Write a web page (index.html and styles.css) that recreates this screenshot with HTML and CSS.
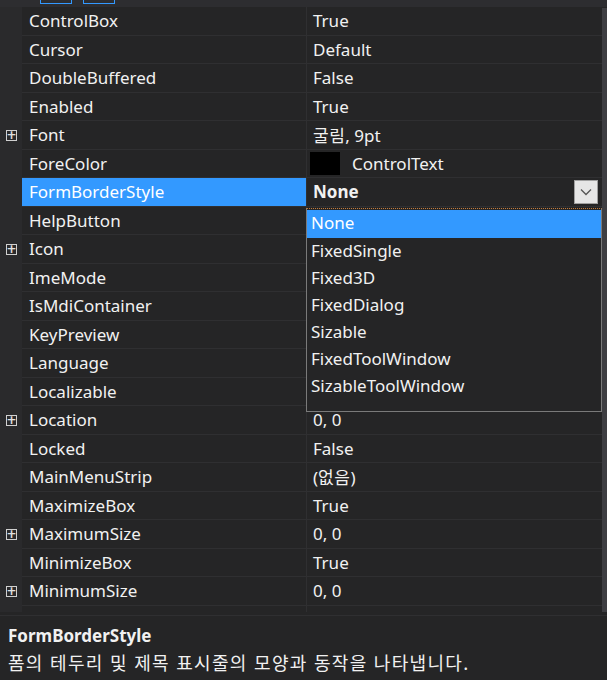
FILE: index.html
```html
<!DOCTYPE html>
<html lang="ko">
<head>
<meta charset="UTF-8">
<meta name="viewport" content="width=device-width, initial-scale=1.0">
<title>Properties</title>
<link rel="stylesheet" href="styles.css">
</head>
<body>

<div class="toolbar">
    <span class="tool-btn first"></span>
    <span class="tool-btn"></span>
</div>

<div class="main">
    <div class="grid">
        <div class="row"><div class="gutter"></div><div class="name">ControlBox</div><div class="value">True</div></div>
        <div class="row"><div class="gutter"></div><div class="name">Cursor</div><div class="value">Default</div></div>
        <div class="row"><div class="gutter"></div><div class="name">DoubleBuffered</div><div class="value">False</div></div>
        <div class="row"><div class="gutter"></div><div class="name">Enabled</div><div class="value">True</div></div>
        <div class="row"><div class="gutter"><span class="expand">+</span></div><div class="name">Font</div><div class="value"><span class="ko">굴림</span>, 9pt</div></div>
        <div class="row"><div class="gutter"></div><div class="name">ForeColor</div><div class="value"><span class="swatch"></span>ControlText</div></div>
        <div class="row selected">
            <div class="gutter"></div>
            <div class="name">FormBorderStyle</div>
            <div class="value"><b>None</b>
                <span class="drop-btn">
                    <svg width="12" height="8" viewBox="0 0 12 8"><path d="M1 1.5 L6 6.5 L11 1.5" fill="none" stroke="#555" stroke-width="1.3"/></svg>
                </span>
            </div>
        </div>
        <div class="row"><div class="gutter"></div><div class="name">HelpButton</div><div class="value"></div></div>
        <div class="row"><div class="gutter"><span class="expand">+</span></div><div class="name">Icon</div><div class="value"></div></div>
        <div class="row"><div class="gutter"></div><div class="name">ImeMode</div><div class="value"></div></div>
        <div class="row"><div class="gutter"></div><div class="name">IsMdiContainer</div><div class="value"></div></div>
        <div class="row"><div class="gutter"></div><div class="name">KeyPreview</div><div class="value"></div></div>
        <div class="row"><div class="gutter"></div><div class="name">Language</div><div class="value"></div></div>
        <div class="row"><div class="gutter"></div><div class="name">Localizable</div><div class="value"></div></div>
        <div class="row"><div class="gutter"><span class="expand">+</span></div><div class="name">Location</div><div class="value">0, 0</div></div>
        <div class="row"><div class="gutter"></div><div class="name">Locked</div><div class="value">False</div></div>
        <div class="row"><div class="gutter"></div><div class="name">MainMenuStrip</div><div class="value">(<span class="ko">없음</span>)</div></div>
        <div class="row"><div class="gutter"></div><div class="name">MaximizeBox</div><div class="value">True</div></div>
        <div class="row"><div class="gutter"><span class="expand">+</span></div><div class="name">MaximumSize</div><div class="value">0, 0</div></div>
        <div class="row"><div class="gutter"></div><div class="name">MinimizeBox</div><div class="value">True</div></div>
        <div class="row"><div class="gutter"><span class="expand">+</span></div><div class="name">MinimumSize</div><div class="value">0, 0</div></div>
        <div class="row tail"><div class="gutter"></div><div class="name"></div><div class="value"></div></div>

        <ul class="dropdown">
            <li class="active">None</li>
            <li>FixedSingle</li>
            <li>Fixed3D</li>
            <li>FixedDialog</li>
            <li>Sizable</li>
            <li>FixedToolWindow</li>
            <li>SizableToolWindow</li>
        </ul>
    </div>
    <div class="scrollbar"></div>
</div>

<div class="description">
    <div class="desc-title">FormBorderStyle</div>
    <div class="desc-text">폼의 테두리 및 제목 표시줄의 모양과 동작을 나타냅니다.</div>
</div>

</body>
</html>
```

FILE: styles.css
```css
body {
    margin: 0;
    width: 607px;
    height: 680px;
    overflow: hidden;
    background-color: #252526;
    color: #f1f1f1;
    font-family: "Noto Sans", "Noto Sans CJK KR", sans-serif;
    font-size: 17px;
}
.ko {
    font-family: "Noto Sans CJK KR", sans-serif;
    font-size: 17px;
    letter-spacing: 0.5px;
}
.toolbar {
    height: 7px;
    background-color: #2d2d30;
    position: relative;
    overflow: hidden;
}
.toolbar .tool-btn {
    position: absolute;
    bottom: 3px;
    left: 83px;
    width: 32px;
    height: 20px;
    border: 1px solid #3399ff;
    box-sizing: border-box;
}
.toolbar .tool-btn.first {
    left: 40px;
}
.main {
    display: flex;
    height: 605px;
}
.grid {
    flex: 1;
    position: relative;
}
.scrollbar {
    width: 5px;
    margin-top: 1px;
    background-color: #3e3e42;
}
.row {
    display: grid;
    grid-template-columns: 22px 285px 1fr;
    height: 28.5px;
    line-height: 28px;
}
.row.tail {
    height: 6px;
}
.row .gutter {
    background-color: #2a2a2c;
    display: flex;
    align-items: center;
    justify-content: center;
}
.row .name,
.row .value {
    border-bottom: 1px solid #2f2f31;
    white-space: nowrap;
    overflow: hidden;
    box-sizing: border-box;
}
.row .name {
    padding-left: 7px;
    border-right: 1px solid #2f2f31;
}
.row .value {
    padding-left: 6px;
    position: relative;
}
.row.tail .name,
.row.tail .value {
    border-bottom: none;
}
.expand {
    width: 11px;
    height: 11px;
    border: 1px solid #d0d0d0;
    box-sizing: border-box;
    font-size: 12px;
    line-height: 8px;
    text-align: center;
    color: #e0e0e0;
    font-family: "DejaVu Sans", sans-serif;
    font-weight: bold;
}
.swatch {
    display: inline-block;
    width: 30px;
    height: 23px;
    background-color: #000;
    vertical-align: middle;
    margin: -3px 12px 0 -3px;
}
.row.selected .name {
    background-color: #3399ff;
    color: #fff;
}
.row.selected .value b {
    font-weight: bold;
}
.drop-btn {
    position: absolute;
    right: 4px;
    top: 2px;
    width: 24px;
    height: 24px;
    box-sizing: border-box;
    border: 1px solid #a0a0a0;
    background-color: #e6e6e6;
    display: flex;
    align-items: center;
    justify-content: center;
}
.dropdown {
    position: absolute;
    left: 306px;
    top: 201px;
    width: 296px;
    height: 204px;
    margin: 0;
    padding: 1px 0 0;
    list-style: none;
    box-sizing: border-box;
    background-color: #252526;
    border: 1px solid #7a7a7a;
    border-top: 1px dotted #c07a3a;
}
.dropdown li {
    height: 27px;
    line-height: 26px;
    padding-left: 4px;
    white-space: nowrap;
}
.dropdown li.active {
    height: 28px;
    background-color: #3399ff;
    color: #fff;
}
.description {
    border-top: 1px solid #2f2f31;
    padding: 6px 8px;
    margin-top: 3px;
}
.desc-title {
    font-weight: bold;
    line-height: 27px;
}
.desc-text {
    font-family: "Noto Sans CJK KR", sans-serif;
    font-size: 18px;
    letter-spacing: 1.3px;
    line-height: 27px;
}
```
